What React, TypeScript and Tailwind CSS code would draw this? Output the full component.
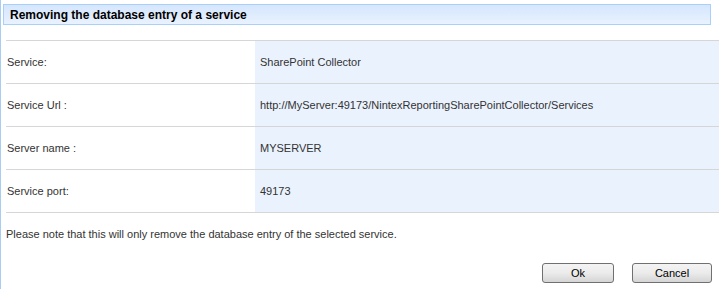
import React from "react";

const rows: [string, string][] = [
  ["Service:", "SharePoint Collector"],
  ["Service Url :", "http://MyServer:49173/NintexReportingSharePointCollector/Services"],
  ["Server name :", "MYSERVER"],
  ["Service port:", "49173"],
];

export default function App() {
  return (
    <div className="w-[724px] h-[289px] bg-white border-l border-[#a9cdf0] flex flex-col font-['Liberation_Sans',Arial,sans-serif] text-[11px] text-[#333333]">
      <div className="ml-[2px] mt-[4px] w-[708px] h-[21px] border border-[#a9d0f8] bg-gradient-to-b from-[#d5e6fd] to-[#e9f2fe] flex items-center pl-[6px] text-[12px] font-bold text-black">
        Removing the database entry of a service
      </div>
      <div className="mt-[15px] ml-[5px] w-[713px] flex flex-col border-b border-[#d6d6d6]">
        {rows.map(([k, v]) => (
          <div key={k} className="flex h-[43px] border-t border-[#d6d6d6]">
            <div className="w-[249px] pl-[1px] flex items-center">{k}</div>
            <div className="flex-1 bg-[#eaf2fe] pl-[5px] flex items-center">{v}</div>
          </div>
        ))}
      </div>
      <div className="mt-[15px] ml-[5px] leading-[13px]">
        Please note that this will only remove the database entry of the selected service.
      </div>
      <div className="mt-[22px] flex justify-end gap-[18px] pr-[12px]">
        <button className="w-[72px] h-[20px] rounded-[3px] border border-[#707070] bg-gradient-to-b from-[#f4f4f4] via-[#ebebeb] to-[#d5d5d5] text-[11px] text-black leading-none">
          Ok
        </button>
        <button className="w-[80px] h-[20px] rounded-[3px] border border-[#707070] bg-gradient-to-b from-[#f4f4f4] via-[#ebebeb] to-[#d5d5d5] text-[11px] text-black leading-none">
          Cancel
        </button>
      </div>
    </div>
  );
}
